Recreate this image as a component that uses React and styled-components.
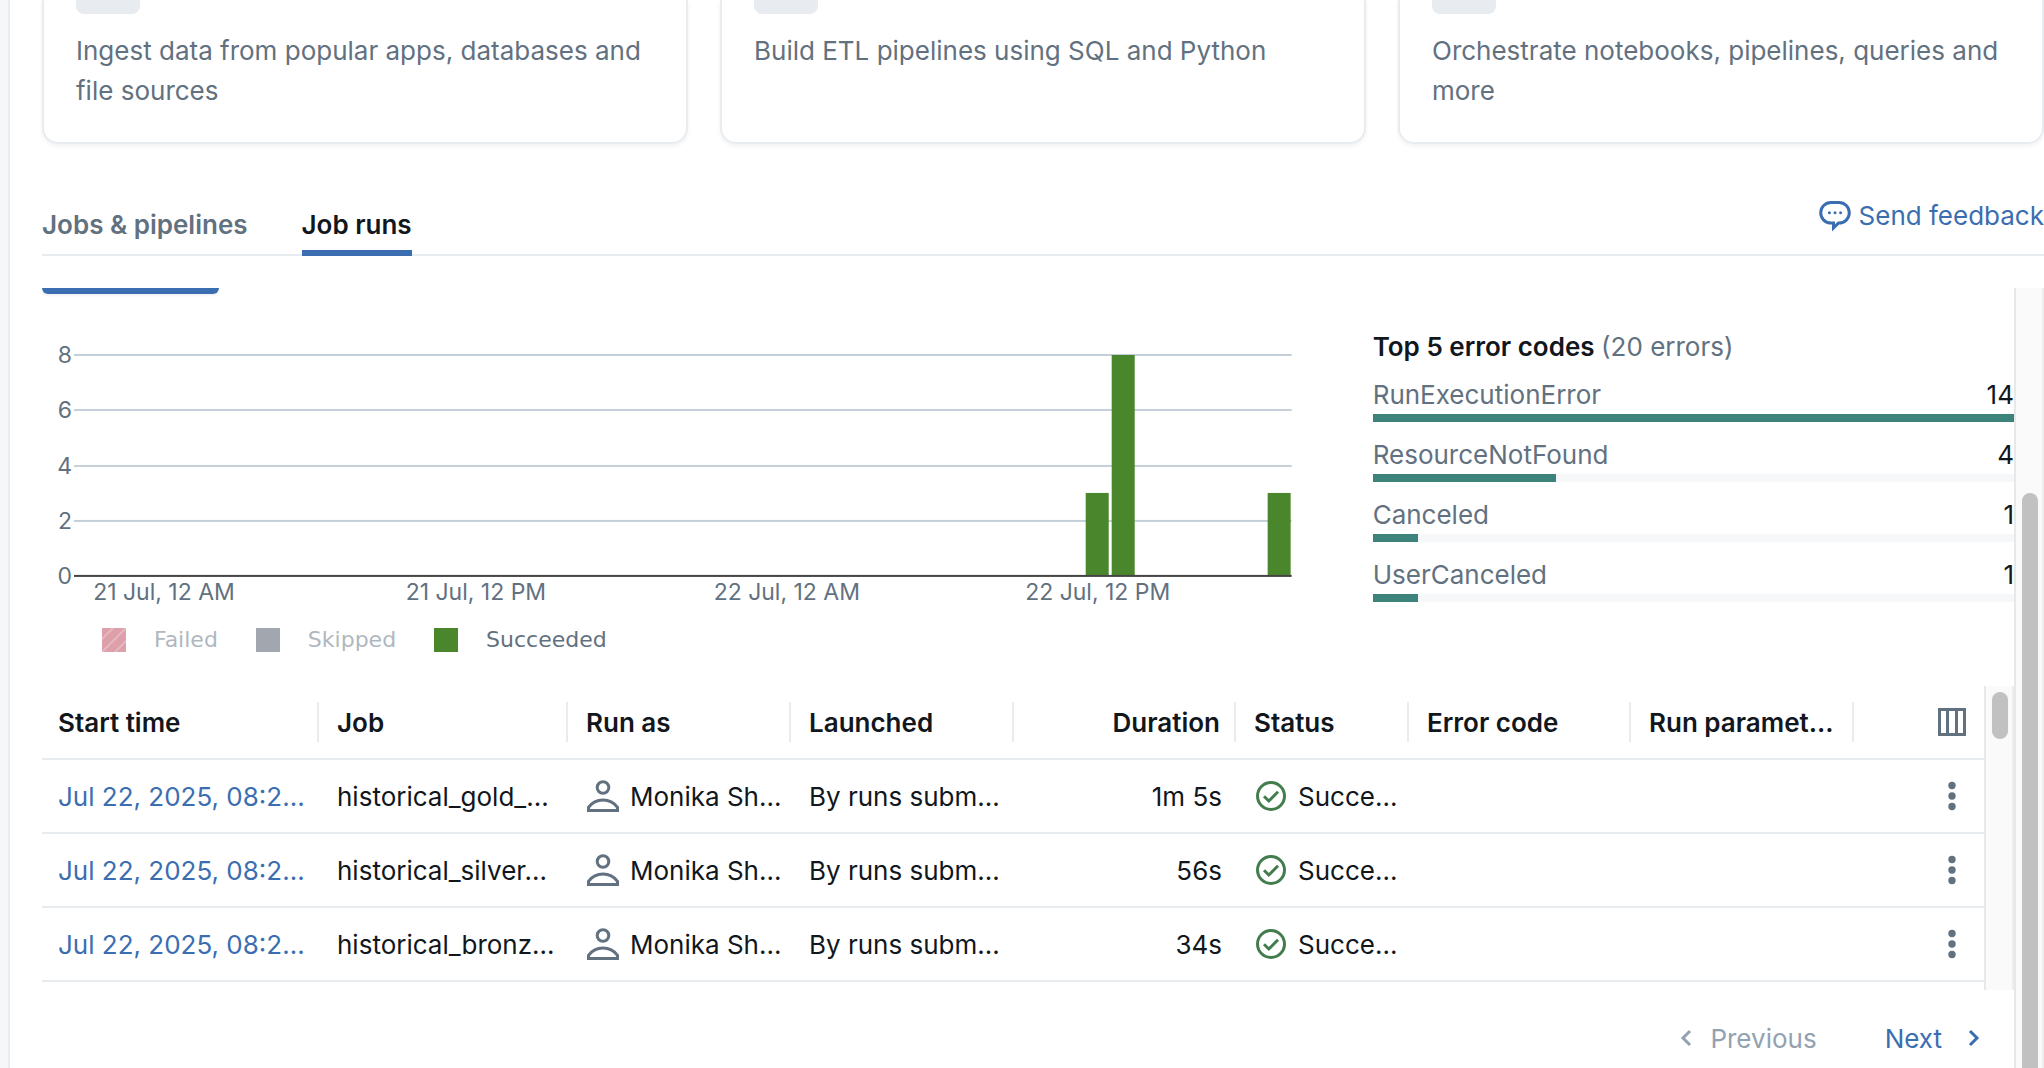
import React from "react";
import styled, { createGlobalStyle } from "styled-components";

const color = {
  ink: "#11171c",
  muted: "#627180",
  faint: "#92a2b1",
  line: "#e8ecf0",
  wash: "#f6f7f9",
  blue: "#3b6eb0",
  teal: "#3c837b",
  green: "#4a862b",
  success: "#437d4d",
};

const GlobalStyle = createGlobalStyle`
  * { box-sizing: border-box; }
  body {
    margin: 0;
    background: #fff;
    color: ${color.ink};
    font-family: Inter, "Liberation Sans", sans-serif;
    font-size: 26px;
    line-height: 40px;
  }
  button {
    border: 0;
    padding: 0;
    background: none;
    color: inherit;
    font: inherit;
    cursor: pointer;
  }
  svg { display: block; flex: none; }
`;

const Shell = styled.div`
  display: flex;
  height: 100vh;
  overflow: hidden;
`;

const SideEdge = styled.div`
  flex: none;
  width: 10px;
  background: ${color.wash};
  border-right: 2px solid ${color.line};
`;

const Main = styled.main`
  flex: 1;
  min-width: 0;
  display: flex;
  flex-direction: column;
  padding-left: 32px;
`;

const Cards = styled.section`
  display: grid;
  grid-template-columns: repeat(3, 1fr);
  gap: 32px;
`;

const Card = styled.article`
  padding: 0 32px 31px;
  border: 2px solid ${color.line};
  border-top: 0;
  border-radius: 0 0 16px 16px;
  box-shadow: 0 2px 4px rgba(0, 0, 0, 0.06);
  color: ${color.muted};
`;

const CardIcon = styled.div`
  width: 64px;
  height: 14px;
  margin-bottom: 17px;
  border-radius: 0 0 8px 8px;
  background: ${color.line};
`;

const CardText = styled.p`
  margin: 0;
`;

const TabBar = styled.header`
  display: flex;
  justify-content: space-between;
  align-items: flex-start;
  margin-top: 52px;
  border-bottom: 2px solid ${color.line};
`;

const Tabs = styled.nav`
  display: flex;
  gap: 54px;
  padding-top: 9px;
  margin-bottom: -2px;
`;

const Tab = styled.button`
  padding-bottom: 5px;
  border-bottom: 6px solid ${(p) => (p.$active ? color.blue : "transparent")};
  color: ${(p) => (p.$active ? color.ink : color.muted)};
  font-weight: 600;
`;

const Feedback = styled.a`
  display: flex;
  align-items: center;
  gap: 8px;
  color: ${color.blue};
  text-decoration: none;
`;

const ScrollRegion = styled.div`
  flex: 1;
  min-height: 0;
  display: flex;
  margin-top: 32px;
  overflow: hidden;
`;

const ScrollContent = styled.div`
  flex: 1;
  min-width: 0;
`;

const Track = styled.div`
  flex: none;
  width: 30px;
  padding: ${(p) => p.$offset}px 6px 0;
  background: #fafafa;
  border-left: 2px solid #e8e8e8;
  border-right: 2px solid #ededed;
`;

const Thumb = styled.div`
  width: 16px;
  height: ${(p) => p.$size};
  border-radius: 8px;
  background: #c1c1c1;
`;

const ViewButtonEdge = styled.div`
  width: 177px;
  height: 6px;
  border-radius: 0 0 8px 8px;
  background: ${color.blue};
  box-shadow: 0 2px 2px rgba(0, 0, 0, 0.05);
`;

const Summary = styled.section`
  display: grid;
  grid-template-columns: 2fr 1fr;
  gap: 48px;
  height: 392px;
`;

const ChartSvg = styled.svg`
  width: 100%;
  height: auto;
  text {
    fill: ${color.muted};
    font-family: Inter, "Liberation Sans", sans-serif;
    font-size: 23px;
  }
`;

const Legend = styled.ul`
  display: flex;
  gap: 38px;
  margin: 18px 0 0;
  padding: 0 0 0 60px;
  list-style: none;
  font-family: "DejaVu Sans", Verdana, sans-serif;
  font-size: 22px;
  line-height: 24px;
`;

const LegendItem = styled.li`
  display: flex;
  gap: 28px;
  color: ${color.muted};
  opacity: ${(p) => (p.$off ? 0.5 : 1)};
`;

const Swatch = styled.span`
  width: 24px;
  height: 24px;
  background: ${(p) => p.$fill};
`;

const Errors = styled.div`
  display: flex;
  flex-direction: column;
  gap: 16px;
  padding-top: 38px;
  line-height: 34px;
`;

const ErrorsTitle = styled.h2`
  margin: 0;
  font-size: 26px;
  font-weight: 600;
  line-height: 30px;
  span { color: ${color.muted}; font-weight: 400; }
`;

const ErrorItem = styled.div`
  display: grid;
  gap: 2px;
`;

const ErrorLabel = styled.div`
  display: flex;
  justify-content: space-between;
  span { color: ${color.muted}; }
`;

const Meter = styled.div`
  height: 8px;
  background: ${color.wash};
`;

const MeterFill = styled.div`
  height: 100%;
  background: ${color.teal};
`;

const TableArea = styled.section`
  display: flex;
  height: 304px;
  overflow: hidden;
`;

const TableWrap = styled.div`
  flex: 1;
  min-width: 0;
`;

const Table = styled.table`
  width: 100%;
  table-layout: fixed;
  border-collapse: separate;
  border-spacing: 0;
`;

const HeadCell = styled.th`
  height: 74px;
  padding: 0 2px 0 0;
  border-bottom: 2px solid ${color.line};
  font-weight: 600;
  text-align: ${(p) => p.$align || "left"};
  white-space: nowrap;
`;

const HeadLabel = styled.div`
  height: 40px;
  padding: 1px 14px 0 16px;
  border-right: 2px solid ${(p) => (p.$last ? "transparent" : color.line)};
  overflow: hidden;
`;

const Cell = styled.td`
  height: 74px;
  padding: 2px 16px 0;
  border-bottom: 2px solid ${color.line};
  text-align: ${(p) => p.$align || "left"};
  white-space: nowrap;
  overflow: hidden;
`;

const RunLink = styled.a`
  color: ${color.blue};
  text-decoration: none;
`;

const IconText = styled.div`
  display: flex;
  align-items: center;
  gap: 10px;
  svg { margin-bottom: 2px; }
`;

const IconButton = styled.button`
  display: block;
  margin: 0 2px 0 auto;
  color: ${color.muted};
`;

const HeadIconButton = styled(IconButton)`
  margin: 5px 0 0 auto;
`;

const Pager = styled.nav`
  display: flex;
  justify-content: flex-end;
  gap: 68px;
  padding: 29px 32px 0 0;
`;

const PagerButton = styled.button`
  display: flex;
  align-items: center;
  gap: ${(p) => p.$gap}px;
  color: ${color.blue};
  &:disabled { color: ${color.faint}; }
`;

const SpeechIcon = () => (
  <svg width="32" height="32" viewBox="0 0 32 32" fill="none" stroke="currentColor" strokeWidth="3" aria-hidden="true">
    <path d="M12 2.5h8a10.3 10.3 0 0 1 0 20.600h-.6L14.500 28v-4.900H12a10.300 10.300 0 0 1 0-20.600z" />
    <g fill="currentColor" stroke="none">
      <circle cx="10.4" cy="12.8" r="1.5" />
      <circle cx="16" cy="12.8" r="1.5" />
      <circle cx="21.6" cy="12.8" r="1.5" />
    </g>
  </svg>
);

const UserIcon = () => (
  <svg width="34" height="32" viewBox="0 0 34 32" fill="none" stroke="currentColor" strokeWidth="3" color={color.muted} aria-hidden="true">
    <circle cx="17" cy="7.5" r="5.8" />
    <path d="M2.5 30.5v-3.2C6 22.6 11 20 17 20s11 2.6 14.5 7.3v3.2z" />
  </svg>
);

const CheckIcon = () => (
  <svg width="34" height="32" viewBox="0 0 34 32" fill="none" stroke="currentColor" strokeWidth="3" color={color.success} aria-hidden="true">
    <circle cx="17" cy="16" r="13.5" />
    <path d="M10 16.2l4.8 4.8 9.2-9.2" />
  </svg>
);

const ColumnsIcon = () => (
  <svg width="28" height="28" viewBox="0 0 28 28" fill="none" stroke="currentColor" strokeWidth="3" aria-hidden="true">
    <rect x="1.5" y="1.5" width="25" height="25" />
    <path d="M9.500 1v26M18.500 1v26" />
  </svg>
);

const DotsIcon = () => (
  <svg width="28" height="32" viewBox="0 0 28 32" fill="currentColor" aria-hidden="true">
    <circle cx="14" cy="4.5" r="3.7" />
    <circle cx="14" cy="15" r="3.7" />
    <circle cx="14" cy="25.5" r="3.7" />
  </svg>
);

const ChevronIcon = ({ flip }) => (
  <svg width="16" height="20" viewBox="0 0 16 20" fill="none" stroke="currentColor" strokeWidth="3" aria-hidden="true">
    <path d={flip ? "M12 2l-7 7 7 7" : "M4 2l7 7-7 7"} />
  </svg>
);

const cards = [
  "Ingest data from popular apps, databases and file sources",
  "Build ETL pipelines using SQL and Python",
  "Orchestrate notebooks, pipelines, queries and more",
];

const errors = [
  { code: "RunExecutionError", count: 14 },
  { code: "ResourceNotFound", count: 4 },
  { code: "Canceled", count: 1 },
  { code: "UserCanceled", count: 1 },
];

const legend = [
  {
    label: "Failed",
    off: true,
    fill: "repeating-linear-gradient(135deg, #bd4257 0 7px, #cf7080 7px 9px)",
  },
  { label: "Skipped", off: true, fill: "#485261" },
  { label: "Succeeded", off: false, fill: color.green },
];

const chart = {
  ticks: [8, 6, 4, 2],
  labels: [
    [122, "21 Jul, 12 AM"],
    [434, "21 Jul, 12 PM"],
    [745, "22 Jul, 12 AM"],
    [1056, "22 Jul, 12 PM"],
  ],
  bars: [
    [1044, 3],
    [1070, 8],
    [1226, 3],
  ],
};

const baseY = 282;
const unitY = 27.6;

function RunsChart() {
  return (
    <ChartSvg viewBox="0 0 1283 316" role="img" aria-label="Job runs over time">
      {chart.ticks.map((t) => (
        <g key={t}>
          <rect x="32" y={Math.round(baseY - t * unitY) - 1} width="1218" height="2" fill="#c5cfd9" />
          <text x="30" y={Math.round(baseY - t * unitY) + 8} textAnchor="end">{t}</text>
        </g>
      ))}
      <text x="30" y={baseY + 8} textAnchor="end">0</text>
      {chart.bars.map(([x, n]) => (
        <rect key={x} x={x} y={Math.round(baseY - n * unitY)} width="23" height={Math.round(n * unitY)} fill={color.green} />
      ))}
      <rect x="32" y={baseY - 1} width="1218" height="2" fill="#444" />
      {chart.labels.map(([x, label]) => (
        <text key={x} x={x} y="306" textAnchor="middle">{label}</text>
      ))}
    </ChartSvg>
  );
}

const columns = [
  { label: "Start time", width: 279 },
  { label: "Job", width: 249 },
  { label: "Run as", width: 223 },
  { label: "Launched", width: 223 },
  { label: "Duration", width: 222, align: "right" },
  { label: "Status", width: 173 },
  { label: "Error code", width: 222 },
  { label: "Run paramet...", width: 223 },
];

const runs = [
  { job: "historical_gold_...", duration: "1m 5s" },
  { job: "historical_silver...", duration: "56s" },
  { job: "historical_bronz...", duration: "34s" },
];

export default function App() {
  return (
    <>
      <GlobalStyle />
      <Shell>
        <SideEdge />
        <Main>
          <Cards>
            {cards.map((text) => (
              <Card key={text}>
                <CardIcon />
                <CardText>{text}</CardText>
              </Card>
            ))}
          </Cards>
          <TabBar>
            <Tabs>
              <Tab>Jobs &amp; pipelines</Tab>
              <Tab $active>Job runs</Tab>
            </Tabs>
            <Feedback href="#feedback">
              <SpeechIcon />
              Send feedback
            </Feedback>
          </TabBar>
          <ScrollRegion>
            <ScrollContent>
              <ViewButtonEdge />
              <Summary>
                <div>
                  <RunsChart />
                  <Legend>
                    {legend.map((l) => (
                      <LegendItem key={l.label} $off={l.off}>
                        <Swatch $fill={l.fill} />
                        {l.label}
                      </LegendItem>
                    ))}
                  </Legend>
                </div>
                <Errors>
                  <ErrorsTitle>
                    Top 5 error codes <span>(20 errors)</span>
                  </ErrorsTitle>
                  {errors.map((e) => (
                    <ErrorItem key={e.code}>
                      <ErrorLabel>
                        <span>{e.code}</span>
                        {e.count}
                      </ErrorLabel>
                      <Meter>
                        <MeterFill style={{ width: `${(e.count / errors[0].count) * 100}%` }} />
                      </Meter>
                    </ErrorItem>
                  ))}
                </Errors>
              </Summary>
              <TableArea>
                <TableWrap>
                  <Table>
                    <colgroup>
                      {columns.map((c) => (
                        <col key={c.label} style={{ width: c.width }} />
                      ))}
                      <col />
                    </colgroup>
                    <thead>
                      <tr>
                        {columns.map((c) => (
                          <HeadCell key={c.label} $align={c.align} scope="col">
                            <HeadLabel>{c.label}</HeadLabel>
                          </HeadCell>
                        ))}
                        <HeadCell scope="col">
                          <HeadLabel $last>
                            <HeadIconButton aria-label="Choose columns">
                              <ColumnsIcon />
                            </HeadIconButton>
                          </HeadLabel>
                        </HeadCell>
                      </tr>
                    </thead>
                    <tbody>
                      {runs.map((r) => (
                        <tr key={r.job}>
                          <Cell>
                            <RunLink href="#run">Jul 22, 2025, 08:2...</RunLink>
                          </Cell>
                          <Cell>{r.job}</Cell>
                          <Cell>
                            <IconText>
                              <UserIcon />
                              Monika Sh...
                            </IconText>
                          </Cell>
                          <Cell>By runs subm...</Cell>
                          <Cell $align="right">{r.duration}</Cell>
                          <Cell>
                            <IconText>
                              <CheckIcon />
                              Succe...
                            </IconText>
                          </Cell>
                          <Cell />
                          <Cell />
                          <Cell>
                            <IconButton aria-label="Run actions">
                              <DotsIcon />
                            </IconButton>
                          </Cell>
                        </tr>
                      ))}
                    </tbody>
                  </Table>
                </TableWrap>
                <Track $offset={6} aria-hidden="true">
                  <Thumb $size="47px" />
                </Track>
              </TableArea>
              <Pager aria-label="Pagination">
                <PagerButton disabled $gap={16}>
                  <ChevronIcon flip />
                  Previous
                </PagerButton>
                <PagerButton $gap={24}>
                  Next
                  <ChevronIcon />
                </PagerButton>
              </Pager>
            </ScrollContent>
            <Track $offset={205} aria-hidden="true">
              <Thumb $size="100vh" />
            </Track>
          </ScrollRegion>
        </Main>
      </Shell>
    </>
  );
}
